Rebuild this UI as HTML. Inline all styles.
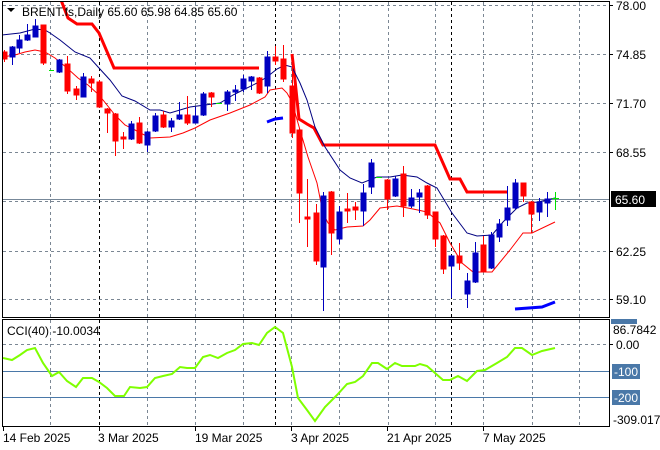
<!DOCTYPE html>
<html><head><meta charset="utf-8"><style>
html,body{margin:0;padding:0;background:#fff;width:660px;height:450px;overflow:hidden}
svg{display:block}
text{font-family:"Liberation Sans",sans-serif;font-size:12px;fill:#000}
</style></head><body>
<svg width="660" height="450" viewBox="0 0 660 450" xmlns="http://www.w3.org/2000/svg">
<defs>
<clipPath id="m"><rect x="3" y="2" width="606" height="315"/></clipPath>
<clipPath id="c"><rect x="3" y="320" width="606" height="106"/></clipPath>
</defs>
<rect width="660" height="450" fill="#fff"/>
<!-- grid main -->
<g stroke="#7b8794" stroke-dasharray="3,3" stroke-width="1">
<path d="M3 5.5H609M3 54.5H609M3 103.5H609M3 152.5H609M3 201.5H609M3 251.5H609M3 299.5H609"/>
<path d="M50.5 2V317M147.5 2V317M195.5 2V317M243.5 2V317M291.5 2V317M339.5 2V317M388.5 2V317M435.5 2V317M483.5 2V317M532.5 2V317M579.5 2V317"/>
<path d="M50.5 320V426M147.5 320V426M195.5 320V426M243.5 320V426M291.5 320V426M339.5 320V426M388.5 320V426M435.5 320V426M483.5 320V426M532.5 320V426M579.5 320V426"/>
<path d="M3 344.5H609"/>
</g>
<g stroke="#000" stroke-dasharray="3,3" stroke-width="1">
<path d="M99.5 2V317M275.5 2V317M451.5 2V317M99.5 320V426M275.5 320V426M451.5 320V426"/>
</g>
<!-- current price line -->
<path d="M3 199.5H609" stroke="#778899" stroke-width="1"/>
<g clip-path="url(#m)">
<!-- thick red stop line -->
<polyline fill="none" stroke="#ff0000" stroke-width="3" points="61,0 68,18 77,24 92,24 99,33 114,68 259,68"/>
<polyline fill="none" stroke="#ff0000" stroke-width="3" points="292,54 295,80 299,119 307,124 314,128 323,145 435,145 450,179 460,179 467,192 507,192"/>
<polyline fill="none" stroke="#0000ff" stroke-width="3" points="267,122 275,119 283,118"/>
<polyline fill="none" stroke="#0000ff" stroke-width="3" points="515,309 542,307 555,302"/>
<!-- navy MA -->
<polyline fill="none" stroke="#000080" stroke-width="1" points="2,35 20,33 35,29 45,30 50,33 60,40 75,52 90,58 99,68 110,80 122,96 135,101 150,110 160,110 170,113 190,107 220,103 233,95 243,90 257,83 267,77 277,69 285,65 292,67 300,83 307,100 315,127 325,147 340,170 350,178 362,183 377,177 390,177 402,175 417,177 427,183 437,188 452,213 467,233 477,236 492,235 503,222 517,208 527,203 538,202 555,198"/>
<!-- red MA -->
<polyline fill="none" stroke="#ff0000" stroke-width="1" points="2,57 15,55 25,52 35,50 45,52 55,58 67,68 78,78 88,85 99,95 107,105 115,115 125,125 135,130 150,138 170,137 183,133 195,128 210,120 230,113 250,105 265,97 270,90 282,88 287,93 292,102 300,130 308,157 317,183 323,213 328,223 335,230 347,227 363,226 370,220 380,208 397,206 413,209 427,212 440,223 450,243 462,263 473,272 492,272 510,250 523,233 532,233 555,222"/>
<!-- candles -->
<g stroke-width="1">
<g stroke="#f00" fill="#f00"><path d="M4.5 50V62"/><rect x="2" y="52" width="5" height="7"/></g>
<g stroke="#0000c0" fill="#0000c0"><path d="M12.5 46V65"/><rect x="10" y="47" width="5" height="10"/></g>
<g stroke="#0000c0" fill="#0000c0"><path d="M19.5 35V53"/><rect x="17" y="40" width="5" height="8"/></g>
<g stroke="#0000c0" fill="#0000c0"><path d="M27.5 24V41"/><rect x="25" y="35" width="5" height="5"/></g>
<g stroke="#0000c0" fill="#0000c0"><path d="M35.5 19V37"/><rect x="33" y="26" width="5" height="11"/></g>
<g stroke="#f00" fill="#f00"><path d="M43.5 25V65"/><rect x="41" y="25" width="5" height="38"/></g>
<path d="M49 70.5H54" stroke="#00e000"/>
<g stroke="#0000c0" fill="#0000c0"><path d="M59.5 59V73"/><rect x="57" y="60" width="5" height="12"/></g>
<g stroke="#f00" fill="#f00"><path d="M67.5 56V94"/><rect x="65" y="64" width="5" height="27"/></g>
<g stroke="#f00" fill="#f00"><path d="M76.5 86V100"/><rect x="74" y="89" width="5" height="6"/></g>
<g stroke="#0000c0" fill="#0000c0"><path d="M83.5 73V97"/><rect x="81" y="77" width="5" height="20"/></g>
<g stroke="#f00" fill="#f00"><path d="M91.5 76V92"/><rect x="89" y="79" width="5" height="4"/></g>
<g stroke="#f00" fill="#f00"><path d="M99.5 80V108"/><rect x="97" y="82" width="5" height="25"/></g>
<g stroke="#f00" fill="#f00"><path d="M107.5 108V133"/><rect x="105" y="109" width="5" height="4"/></g>
<g stroke="#f00" fill="#f00"><path d="M115.5 113V156"/><rect x="113" y="114" width="5" height="27"/></g>
<g stroke="#f00" fill="#f00"><path d="M123.5 132V149"/><rect x="121" y="137" width="5" height="2"/></g>
<g stroke="#0000c0" fill="#0000c0"><path d="M131.5 121V140"/><rect x="129" y="124" width="5" height="15"/></g>
<g stroke="#f00" fill="#f00"><path d="M139.5 117V144"/><rect x="137" y="123" width="5" height="20"/></g>
<g stroke="#0000c0" fill="#0000c0"><path d="M147.5 131V152"/><rect x="145" y="132" width="5" height="13"/></g>
<g stroke="#0000c0" fill="#0000c0"><path d="M155.5 113V132"/><rect x="153" y="116" width="5" height="15"/></g>
<g stroke="#f00" fill="#f00"><path d="M163.5 111V128"/><rect x="161" y="115" width="5" height="12"/></g>
<g stroke="#0000c0" fill="#0000c0"><path d="M171.5 118V132"/><rect x="169" y="121" width="5" height="6"/></g>
<g stroke="#0000c0" fill="#0000c0"><path d="M179.5 102V120"/><rect x="177" y="115" width="5" height="4"/></g>
<g stroke="#f00" fill="#f00"><path d="M187.5 96V125"/><rect x="185" y="115" width="5" height="8"/></g>
<g stroke="#0000c0" fill="#0000c0"><path d="M195.5 107V123"/><rect x="193" y="116" width="5" height="7"/></g>
<g stroke="#0000c0" fill="#0000c0"><path d="M203.5 92V116"/><rect x="201" y="94" width="5" height="21"/></g>
<g stroke="#f00" fill="#f00"><path d="M211.5 92V107"/><rect x="209" y="93" width="5" height="4"/></g>
<path d="M216 103.5H222" stroke="#00e000"/>
<g stroke="#0000c0" fill="#0000c0"><path d="M227.5 90V111"/><rect x="225" y="92" width="5" height="12"/></g>
<g stroke="#0000c0" fill="#0000c0"><path d="M235.5 85V101"/><rect x="233" y="90" width="5" height="2"/></g>
<g stroke="#0000c0" fill="#0000c0"><path d="M243.5 75V92"/><rect x="241" y="79" width="5" height="10"/></g>
<g stroke="#0000c0" fill="#0000c0"><path d="M251.5 76V90"/><rect x="249" y="77" width="5" height="4"/></g>
<g stroke="#f00" fill="#f00"><path d="M259.5 77V94"/><rect x="257" y="78" width="5" height="15"/></g>
<g stroke="#0000c0" fill="#0000c0"><path d="M267.5 51V93"/><rect x="265" y="57" width="5" height="29"/></g>
<g stroke="#f00" fill="#f00"><path d="M275.5 46V65"/><rect x="273" y="57" width="5" height="4"/></g>
<g stroke="#f00" fill="#f00"><path d="M283.5 45V82"/><rect x="281" y="59" width="5" height="20"/></g>
<g stroke="#f00" fill="#f00"><path d="M292.5 54V138"/><rect x="290" y="86" width="5" height="47"/></g>
<g stroke="#f00" fill="#f00"><path d="M299.5 128V223"/><rect x="297" y="130" width="5" height="63"/></g>
<g stroke="#f00" fill="#f00"><path d="M307.5 179V247"/><rect x="305" y="217" width="5" height="2"/></g>
<g stroke="#f00" fill="#f00"><path d="M316.5 204V265"/><rect x="314" y="213" width="5" height="48"/></g>
<g stroke="#0000c0" fill="#0000c0"><path d="M323.5 192V311"/><rect x="321" y="196" width="5" height="71"/></g>
<g stroke="#f00" fill="#f00"><path d="M331.5 191V255"/><rect x="329" y="192" width="5" height="41"/></g>
<g stroke="#0000c0" fill="#0000c0"><path d="M339.5 206V244"/><rect x="337" y="212" width="5" height="27"/></g>
<g stroke="#f00" fill="#f00"><path d="M347.5 193V223"/><rect x="345" y="209" width="5" height="2"/></g>
<g stroke="#f00" fill="#f00"><path d="M355.5 202V220"/><rect x="353" y="207" width="5" height="3"/></g>
<g stroke="#0000c0" fill="#0000c0"><path d="M363.5 184V226"/><rect x="361" y="193" width="5" height="18"/></g>
<g stroke="#0000c0" fill="#0000c0"><path d="M371.5 159V194"/><rect x="369" y="163" width="5" height="24"/></g>
<path d="M376 177.5H382" stroke="#00e000"/>
<g stroke="#f00" fill="#f00"><path d="M387.5 179V210"/><rect x="385" y="180" width="5" height="19"/></g>
<g stroke="#0000c0" fill="#0000c0"><path d="M395.5 176V197"/><rect x="393" y="179" width="5" height="17"/></g>
<g stroke="#f00" fill="#f00"><path d="M403.5 166V217"/><rect x="401" y="174" width="5" height="32"/></g>
<g stroke="#0000c0" fill="#0000c0"><path d="M411.5 189V208"/><rect x="409" y="198" width="5" height="8"/></g>
<g stroke="#0000c0" fill="#0000c0"><path d="M419.5 189V213"/><rect x="417" y="193" width="5" height="4"/></g>
<g stroke="#f00" fill="#f00"><path d="M427.5 185V219"/><rect x="425" y="186" width="5" height="29"/></g>
<g stroke="#f00" fill="#f00"><path d="M435.5 212V247"/><rect x="433" y="212" width="5" height="27"/></g>
<g stroke="#f00" fill="#f00"><path d="M443.5 235V274"/><rect x="441" y="236" width="5" height="33"/></g>
<g stroke="#0000c0" fill="#0000c0"><path d="M451.5 255V298"/><rect x="449" y="256" width="5" height="10"/></g>
<g stroke="#f00" fill="#f00"><path d="M459.5 243V270"/><rect x="457" y="256" width="5" height="7"/></g>
<g stroke="#0000c0" fill="#0000c0"><path d="M467.5 273V308"/><rect x="465" y="281" width="5" height="13"/></g>
<g stroke="#0000c0" fill="#0000c0"><path d="M475.5 242V283"/><rect x="473" y="253" width="5" height="29"/></g>
<g stroke="#f00" fill="#f00"><path d="M483.5 236V272"/><rect x="481" y="245" width="5" height="26"/></g>
<g stroke="#0000c0" fill="#0000c0"><path d="M491.5 232V269"/><rect x="489" y="235" width="5" height="33"/></g>
<g stroke="#0000c0" fill="#0000c0"><path d="M499.5 219V242"/><rect x="497" y="224" width="5" height="13"/></g>
<g stroke="#0000c0" fill="#0000c0"><path d="M507.5 186V226"/><rect x="505" y="208" width="5" height="12"/></g>
<g stroke="#0000c0" fill="#0000c0"><path d="M515.5 179V209"/><rect x="513" y="183" width="5" height="25"/></g>
<g stroke="#f00" fill="#f00"><path d="M523.5 183V202"/><rect x="521" y="183" width="5" height="13"/></g>
<g stroke="#f00" fill="#f00"><path d="M531.5 201V233"/><rect x="529" y="202" width="5" height="12"/></g>
<g stroke="#0000c0" fill="#0000c0"><path d="M539.5 198V221"/><rect x="537" y="202" width="5" height="10"/></g>
<g stroke="#0000c0" fill="#0000c0"><path d="M547.5 192V217"/><rect x="545" y="199" width="5" height="4"/></g>
<g stroke="#00e000"><path d="M555.5 192V210M552 198.5H559"/></g>
</g>
</g>
<!-- CCI level lines -->
<path d="M3 371.5H609M3 397.5H609" stroke="#4a78a8" stroke-width="1"/>
<g clip-path="url(#c)">
<polyline fill="none" stroke="#7fff00" stroke-width="2" points="3,358 12,360 20,355 27,350 35,348 43,363 52,376 59,372 67,381 76,387 83,378 92,378 99,382 107,388 115,396 124,396 130,387 140,388 147,387 155,378 163,376 172,374 180,367 187,368 195,368 203,357 210,355 218,358 227,353 235,350 243,344 252,343 259,345 267,333 275,327 283,333 292,367 298,398 307,410 315,421 325,407 337,395 347,384 355,382 363,376 372,363 378,363 387,369 395,363 402,366 415,366 420,364 427,366 435,373 443,380 450,380 458,376 467,381 477,371 485,370 497,363 507,357 515,348 522,348 532,355 542,351 555,348"/>
</g>
<!-- panel borders -->
<rect x="2.5" y="1.5" width="607" height="316" fill="none" stroke="#000"/>
<rect x="2.5" y="319.5" width="607" height="107" fill="none" stroke="#000"/>
<!-- header -->
<path d="M7 8H15L11 12Z" fill="#000"/>
<text x="22" y="16">BRENT.fs,Daily  65.60 65.98 64.85 65.60</text>
<text x="7" y="335">CCI(40) -10.0034</text>
<!-- right axis -->
<g stroke="#000"><path d="M609 5.5h4M609 54.5h4M609 103.5h4M609 152.5h4M609 251.5h4M609 299.5h4M609 344.5h4"/></g>
<text x="616" y="10">78.00</text>
<text x="616" y="59">74.85</text>
<text x="616" y="108">71.70</text>
<text x="616" y="157">68.55</text>
<rect x="611" y="191" width="45" height="16" fill="#000"/>
<text x="615" y="204" style="fill:#fff">65.60</text>
<text x="616" y="256">62.25</text>
<text x="616" y="304">59.10</text>
<rect x="611" y="319" width="26" height="5" fill="#4a78a8"/>
<text x="613" y="334">86.7842</text>
<text x="616" y="349">0.00</text>
<rect x="612" y="364" width="28" height="15" fill="#4a78a8"/>
<text x="614" y="376" style="fill:#fff">-100</text>
<rect x="612" y="390" width="28" height="15" fill="#4a78a8"/>
<text x="614" y="402" style="fill:#fff">-200</text>
<text x="613" y="424">-309.017</text>
<!-- date axis -->
<g stroke="#000"><path d="M3.5 427v4M99.5 427v4M195.5 427v4M291.5 427v4M387.5 427v4M483.5 427v4"/></g>
<text x="3" y="442">14 Feb 2025</text>
<text x="98" y="442">3 Mar 2025</text>
<text x="195" y="442">19 Mar 2025</text>
<text x="291" y="442">3 Apr 2025</text>
<text x="387" y="442">21 Apr 2025</text>
<text x="483" y="442">7 May 2025</text>
</svg>
</body></html>
